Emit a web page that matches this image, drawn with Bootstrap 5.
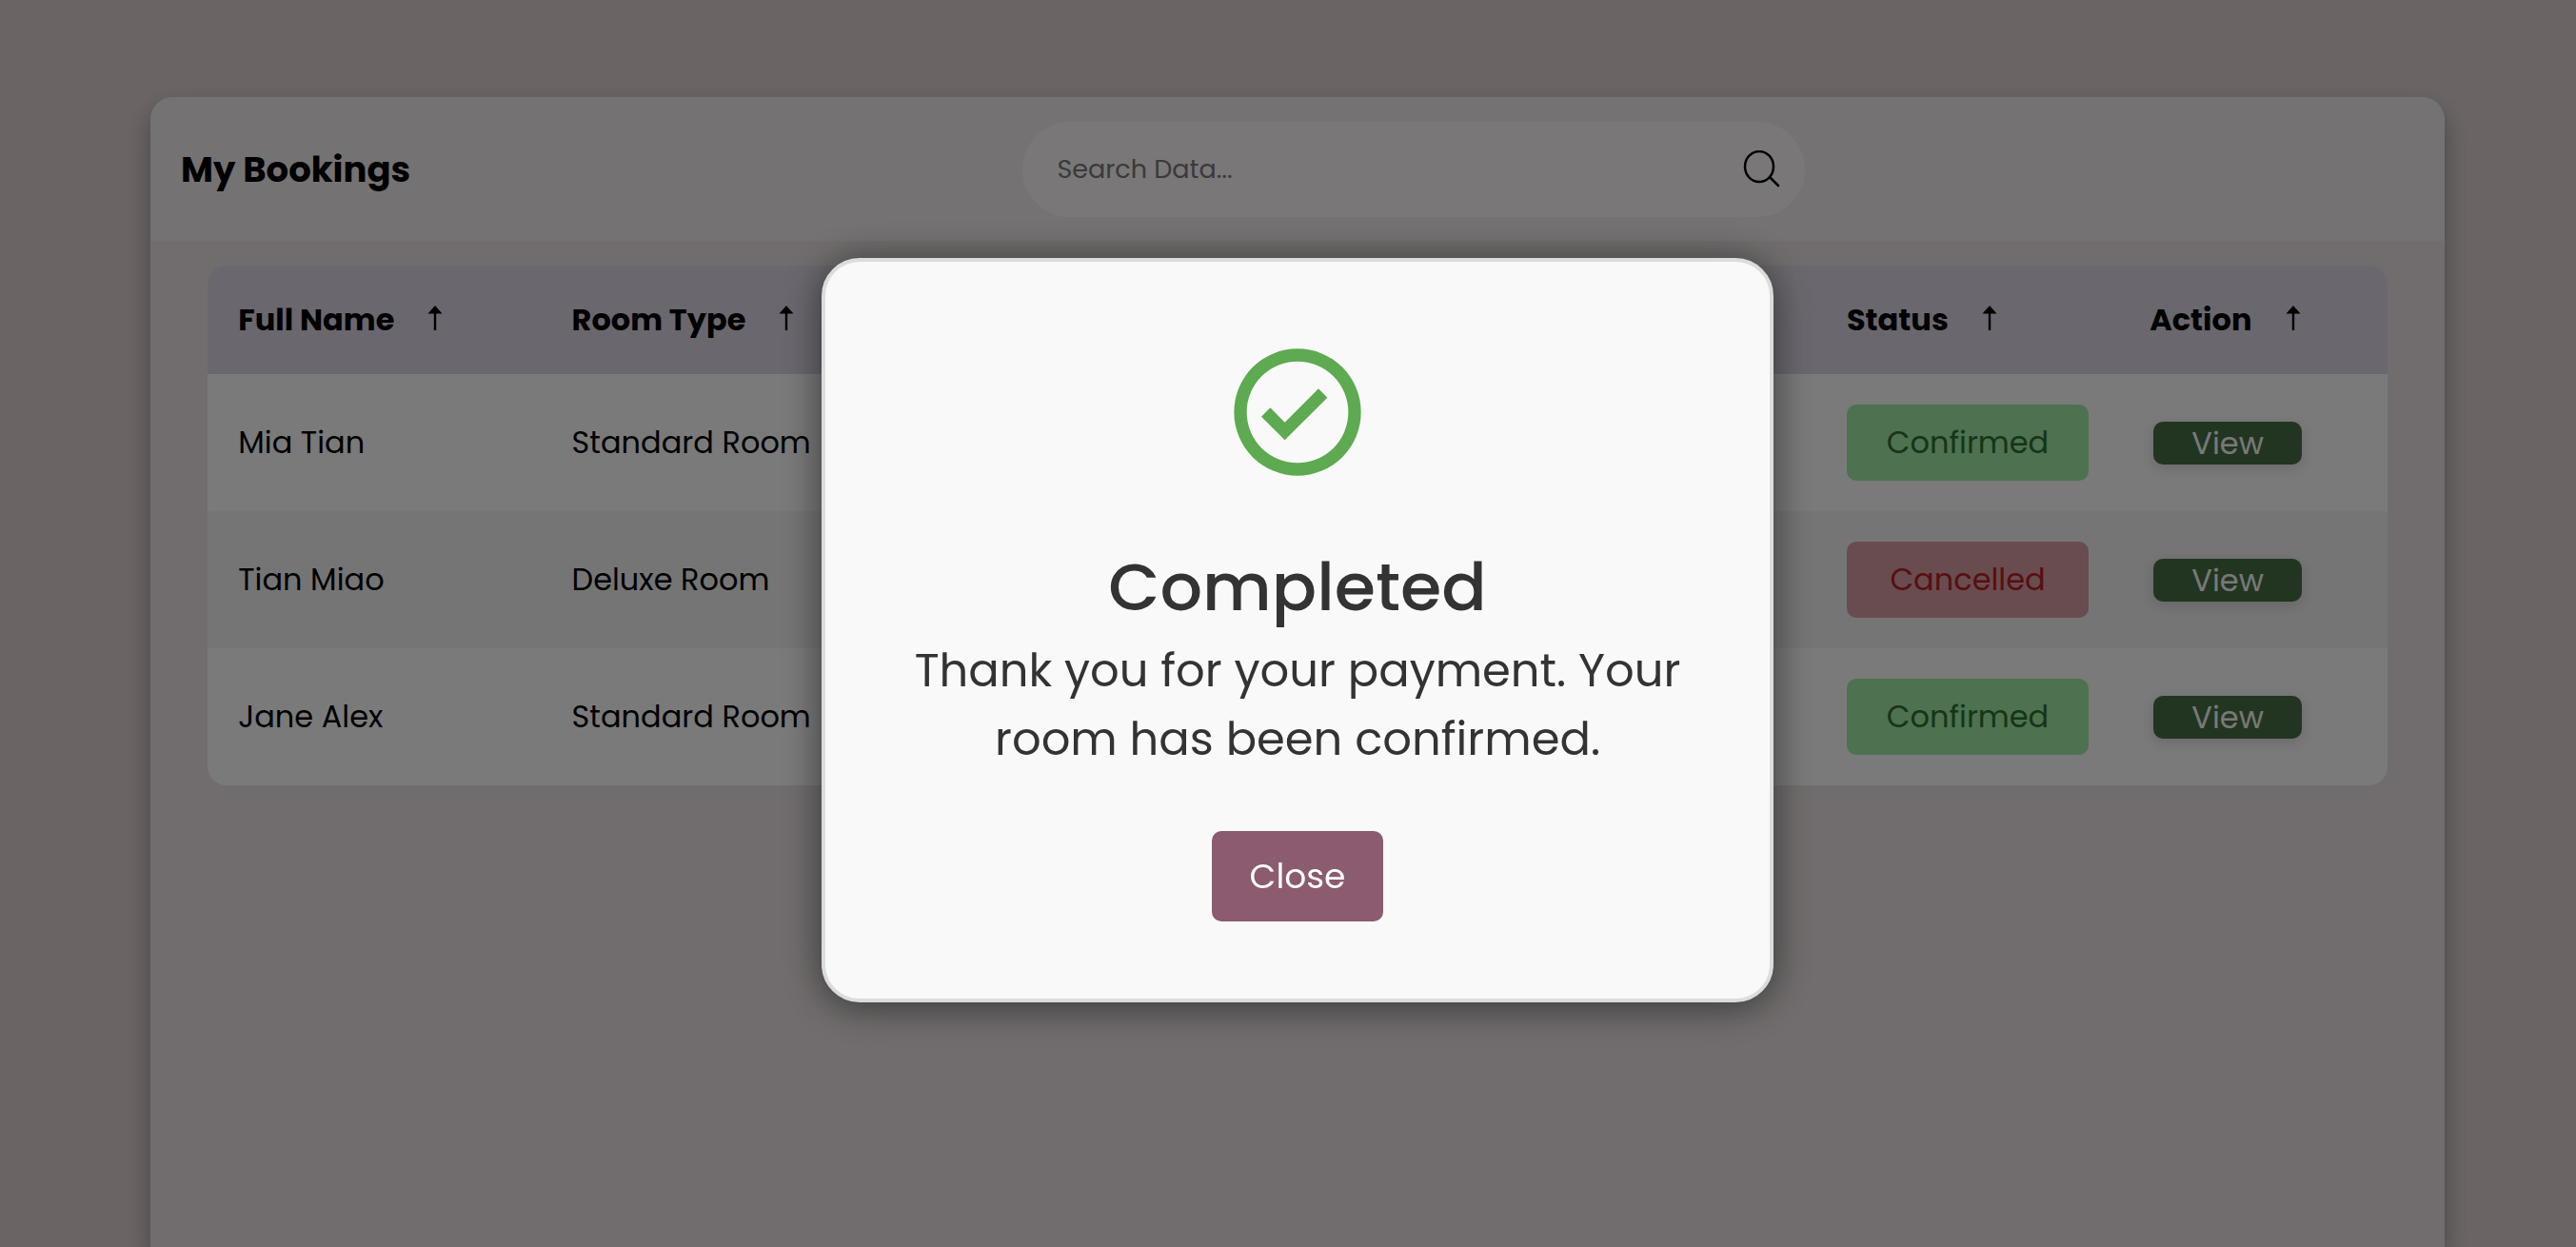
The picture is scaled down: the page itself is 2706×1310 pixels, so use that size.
<!DOCTYPE html>
<html lang="en">
<head>
<meta charset="utf-8">
<meta name="viewport" content="width=device-width, initial-scale=1">
<title>My Bookings</title>
<link href="https://cdn.jsdelivr.net/npm/bootstrap@5.3.0/dist/css/bootstrap.min.css" rel="stylesheet">
<style>
  body { font-family: Poppins, Inter, "Noto Sans", sans-serif; font-size: 32px; line-height: 48px; color: #000; background: #d5c9cb; }
  .page-wrap { padding: 102px 138px 0 158px; }
  .bookings { min-height: calc(100vh - 102px); background: #e3dbdc; border-radius: 24px 24px 0 0; box-shadow: 0 13px 26px #0005; overflow: hidden; }
  .bookings-head { height: 151px; padding: 0 32px; background: #e9e5e5; }
  .bookings-head h1 { min-width: 244px; font-size: 37px; line-height: 48px; font-weight: 700; }
  .search-box { width: 35%; height: 100px; padding: 0 26px 0 36px; border-radius: 50px; background: #f2eff0; }
  .search-box input { font-size: 27px; line-height: 40px; }
  .search-box input::placeholder { color: #757575; opacity: 1; }
  .table-area { width: 95%; margin: 26px auto 0; border-radius: 20px; overflow: hidden; }
  .bookings-table { table-layout: fixed; width: 100%; }
  .bookings-table th { height: 114px; padding: 0 32px; background: #d5cfdd; font-weight: 700; text-align: left; white-space: nowrap; }
  .bookings-table td { height: 144px; padding: 0 32px; background: #f4f4f4; white-space: nowrap; }
  .bookings-table tbody tr:nth-child(even) td { background: #eaeaea; }
  .col-name { width: 15.3%; } .col-room { width: 13.7%; } .col-status { width: 13.9%; } .col-action { width: 12.3%; }
  .sort-arrow { width: 16px; height: 26px; margin-left: 35px; vertical-align: 0; }
  .status-tag { height: 80px; border-radius: 10px; }
  .status-ok { background: #9ce2a0; color: #2c6a30; }
  .status-off { background: #d2989f; color: #b01c26; }
  .btn-view { width: 156px; height: 45px; margin-left: 4px; padding: 0; border: 0; border-radius: 10px; background: #446a40; color: #f0f0f0; font-size: 32px; line-height: 45px; box-shadow: 0 4px 14px #0002; }
  .modal-shift { padding: 14px 0 0 20px; }
  .notice-dialog { max-width: 1000px; }
  .notice { padding: 78px 76px 81px; border: 4px solid #dcdcdc; border-radius: 40px; background: #f9f9f9; color: #333; box-shadow: 0 4px 40px #0008; }
  .notice-icon { width: 160px; height: 160px; }
  .notice h2 { margin: 58px 0 0; font-size: 70px; line-height: 92px; font-weight: 500; }
  .notice p { margin: 6px 0 60px; font-size: 48px; line-height: 72px; }
  .btn-close-notice { width: 180px; height: 95px; border: 0; border-radius: 10px; background: #8b5b70; color: #fff; font-size: 36px; }
</style>
<script src="https://cdn.jsdelivr.net/npm/bootstrap@5.3.0/dist/js/bootstrap.bundle.min.js"></script>
</head>
<body class="modal-open overflow-hidden">
<svg class="d-none" xmlns="http://www.w3.org/2000/svg">
  <symbol id="arrow-up" viewBox="0 0 16 26"><path d="M8 0l7.500 8.500H9.200V26H6.800V8.500H.5z"/></symbol>
</svg>
<div class="page-wrap">
  <main class="bookings">
    <header class="bookings-head d-flex align-items-center justify-content-between">
      <h1 class="mb-0">My Bookings</h1>
      <form class="search-box d-flex align-items-center">
        <input type="search" class="flex-grow-1 border-0 bg-transparent p-0" placeholder="Search Data..." aria-label="Search Data">
        <svg width="40" height="40" viewBox="0 0 40 40" fill="none" stroke="#000" stroke-width="2.500" stroke-linecap="round"><ellipse cx="18" cy="17" rx="15" ry="16"/><path d="M29.500 28.500l8.500 8.500"/></svg>
      </form>
      <span></span>
    </header>
    <section class="table-area">
      <table class="bookings-table">
        <colgroup><col class="col-name"><col class="col-room"><col><col class="col-status"><col class="col-action"></colgroup>
        <thead>
          <tr>
            <th>Full Name<svg class="sort-arrow"><use href="#arrow-up"/></svg></th>
            <th>Room Type<svg class="sort-arrow"><use href="#arrow-up"/></svg></th>
            <th></th>
            <th>Status<svg class="sort-arrow"><use href="#arrow-up"/></svg></th>
            <th>Action<svg class="sort-arrow"><use href="#arrow-up"/></svg></th>
          </tr>
        </thead>
        <tbody>
          <tr><td>Mia Tian</td><td>Standard Room</td><td></td><td><div class="status-tag status-ok d-flex align-items-center justify-content-center">Confirmed</div></td><td><button type="button" class="btn btn-view d-block">View</button></td></tr>
          <tr><td>Tian Miao</td><td>Deluxe Room</td><td></td><td><div class="status-tag status-off d-flex align-items-center justify-content-center">Cancelled</div></td><td><button type="button" class="btn btn-view d-block">View</button></td></tr>
          <tr><td>Jane Alex</td><td>Standard Room</td><td></td><td><div class="status-tag status-ok d-flex align-items-center justify-content-center">Confirmed</div></td><td><button type="button" class="btn btn-view d-block">View</button></td></tr>
        </tbody>
      </table>
    </section>
  </main>
</div>
<div class="modal-backdrop show"></div>
<div class="modal show d-block modal-shift" tabindex="-1" role="dialog" aria-modal="true" aria-labelledby="notice-title">
  <div class="modal-dialog modal-dialog-centered notice-dialog m-auto h-100">
    <div class="modal-content notice align-items-center text-center">
      <svg class="notice-icon" viewBox="0 0 24 24" fill="#5daa50"><path fill-rule="evenodd" d="M12 2a10 10 0 1 0 0 20a10 10 0 0 0 0-20zM12 4a8 8 0 1 1 0 16a8 8 0 0 1 0-16zM6.300 12.700l1.400-1.400 2.300 2.300 5.300-5.300 1.400 1.400-6.700 6.700z"/></svg>
      <h2 id="notice-title">Completed</h2>
      <p>Thank you for your payment. Your room has been confirmed.</p>
      <button type="button" class="btn btn-close-notice">Close</button>
    </div>
  </div>
</div>
</body>
</html>
